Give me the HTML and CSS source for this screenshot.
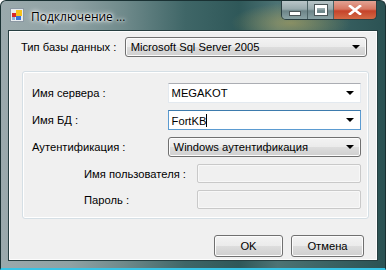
FILE: index.html
```html
<!DOCTYPE html>
<html lang="ru">
<head>
    <meta charset="UTF-8">
    <title>Подключение ...</title>
    <link rel="stylesheet" href="styles.css">
</head>
<body>
    <div class="window">
        <div class="titlebar">
            <svg class="app-icon" width="14" height="14" viewBox="0 0 14 14">
                <rect x="0.5" y="0.5" width="13" height="13" fill="#e8ecef" stroke="#8b98a3"/>
                <rect x="2" y="5" width="4" height="4" fill="#d8262a"/>
                <rect x="6" y="2" width="6" height="6" fill="#f6c21c"/>
                <rect x="6" y="8" width="5" height="4" fill="#3b73d6"/>
                <rect x="2" y="9" width="3" height="3" fill="#8fb0d8"/>
            </svg>
            <span class="title">Подключение ...</span>
            <div class="caption-buttons">
                <div class="cap-btn cap-min"><span class="min-glyph"></span></div>
                <div class="cap-btn cap-max"><span class="max-glyph"></span></div>
                <div class="cap-btn cap-close">
                    <svg width="14" height="10" viewBox="0 0 14 10">
                        <path d="M2 1 L12 9 M12 1 L2 9" stroke="#fff" stroke-width="2.6" stroke-linecap="square"/>
                    </svg>
                </div>
            </div>
        </div>

        <div class="client">
            <div class="top-row">
                <label class="lbl-type">Тип базы данных :</label>
                <div class="combo combo-button wide">
                    <span>Microsoft Sql Server 2005</span>
                    <span class="arrow"></span>
                </div>
            </div>

            <div class="group">
                <div class="row">
                    <label>Имя сервера :</label>
                    <div class="combo combo-edit">
                        <span>MEGAKOT</span>
                        <span class="arrow"></span>
                    </div>
                </div>
                <div class="row">
                    <label>Имя БД :</label>
                    <div class="combo combo-edit focused">
                        <span>FortKB<i class="caret"></i></span>
                        <span class="arrow"></span>
                    </div>
                </div>
                <div class="row">
                    <label>Аутентификация :</label>
                    <div class="combo combo-button">
                        <span>Windows аутентификация</span>
                        <span class="arrow"></span>
                    </div>
                </div>
                <div class="row sub">
                    <label>Имя пользователя :</label>
                    <div class="textbox disabled"></div>
                </div>
                <div class="row sub">
                    <label>Пароль :</label>
                    <div class="textbox disabled"></div>
                </div>
            </div>

            <div class="buttons">
                <button class="btn btn-ok">OK</button>
                <button class="btn btn-cancel">Отмена</button>
            </div>
        </div>
    </div>
</body>
</html>
```

FILE: styles.css
```css
body {
    margin: 0;
    padding: 0;
    font-family: "Liberation Sans", Arial, sans-serif;
    font-size: 11.2px;
    color: #000;
}
.window {
    width: 386px;
    height: 270px;
    box-sizing: border-box;
    display: flex;
    flex-direction: column;
    background:
        radial-gradient(ellipse 60px 20px at 290px 22px, rgba(190, 170, 90, 0.55), transparent),
        linear-gradient(90deg, #9aa9ac 0%, #8fa2a4 18%, #6f8a8b 32%, #3f6667 48%, #2f5859 62%, #4d7374 72%, #3a6263 86%, #2b5253 100%);
    border: 1px solid #1a3133;
    border-bottom: 2px solid #36c4e6;
    border-radius: 6px 6px 0 0;
}
.titlebar {
    height: 29px;
    display: flex;
    align-items: flex-start;
    padding-left: 9px;
}
.app-icon {
    margin-top: 7px;
}
.title {
    margin-left: 7px;
    margin-top: 7px;
    font-family: "Open Sans", "Noto Sans", sans-serif;
    font-size: 12px;
    color: #000;
    text-shadow: 0 0 6px #fff, 0 0 4px #fff, 0 0 2px #fff;
}
.caption-buttons {
    margin-left: auto;
    margin-right: 8px;
    display: flex;
    height: 18px;
    border: 1px solid #2a3f42;
    border-top: none;
    border-radius: 0 0 5px 5px;
    overflow: hidden;
}
.cap-btn {
    display: flex;
    align-items: center;
    justify-content: center;
    height: 18px;
}
.cap-min, .cap-max {
    width: 25px;
    background: linear-gradient(#b9c6c8 0%, #98aaad 45%, #6d8588 55%, #8aa2a4 100%);
    border-right: 1px solid #4b6264;
}
.cap-close {
    width: 42px;
    background: linear-gradient(#e3a394 0%, #d77762 45%, #c5432a 55%, #d36a45 100%);
}
.min-glyph {
    width: 10px;
    height: 3px;
    margin-top: 6px;
    background: #fff;
    border: 1px solid #4a5557;
}
.max-glyph {
    width: 8px;
    height: 5px;
    border: 2px solid #fff;
    border-top-width: 3px;
    outline: 1px solid #4a5557;
}
.client {
    flex: 1;
    margin: 0 7px 7px 7px;
    background: #f0f0f0;
    border: 1px solid #263e40;
    box-shadow: inset 0 0 0 1px #fdfdfd;
    padding: 6px 10px 0 12px;
    display: flex;
    flex-direction: column;
}
.top-row {
    display: flex;
    align-items: center;
    height: 20px;
}
.lbl-type {
    width: 104px;
}
.combo {
    box-sizing: border-box;
    height: 20px;
    display: flex;
    align-items: center;
    padding: 0 6px 0 5px;
}
.combo .arrow {
    margin-left: auto;
    width: 0;
    height: 0;
    border-left: 4px solid transparent;
    border-right: 4px solid transparent;
    border-top: 4px solid #000;
}
.wide {
    width: 243px;
}
.combo-button {
    border: 1px solid #707070;
    border-radius: 3px;
    background: linear-gradient(#f3f3f3 0%, #ebebeb 50%, #dddddd 51%, #cfcfcf 100%);
    box-shadow: inset 0 0 0 1px #fcfcfc;
}
.combo-edit {
    background: #fff;
    border: 1px solid #e3e9ef;
    border-top-color: #abadb3;
    padding-left: 3px;
}
.combo-edit.focused {
    border-color: #5b9bd1;
    border-top-color: #3d7bad;
}
.caret {
    display: inline-block;
    width: 1px;
    height: 13px;
    background: #000;
    vertical-align: -2px;
}
.group {
    margin-top: 14px;
    margin-left: 1px;
    width: 347px;
    box-sizing: border-box;
    height: 148px;
    border: 1px solid #d5dfe5;
    border-radius: 3px;
    box-shadow: inset 0 0 0 1px #fff;
    padding: 11px 7px 0 9px;
    display: flex;
    flex-direction: column;
    gap: 7px;
}
.row {
    display: flex;
    align-items: center;
}
.row label {
    width: 136px;
}
.row .combo {
    width: 194px;
}
.row.sub {
    padding-left: 52px;
}
.row.sub label {
    width: 113px;
}
.textbox {
    box-sizing: border-box;
    width: 164px;
    height: 19px;
    border: 1px solid #c9c9c9;
    border-radius: 2px;
}
.textbox.disabled {
    background: #f0f0f0;
    box-shadow: inset 0 0 0 1px #f8f8f8;
}
.buttons {
    margin-top: 16px;
    display: flex;
    justify-content: flex-end;
    gap: 8px;
    padding-right: 3px;
}
.btn {
    height: 22px;
    font-family: "Liberation Sans", Arial, sans-serif;
    font-size: 11.2px;
    color: #000;
    border: 1px solid #707070;
    border-radius: 3px;
    background: linear-gradient(#f3f3f3 0%, #ebebeb 50%, #dddddd 51%, #cfcfcf 100%);
    box-shadow: inset 0 0 0 1px #fcfcfc;
    padding: 0;
}
.btn-ok {
    width: 69px;
}
.btn-cancel {
    width: 73px;
}
```
